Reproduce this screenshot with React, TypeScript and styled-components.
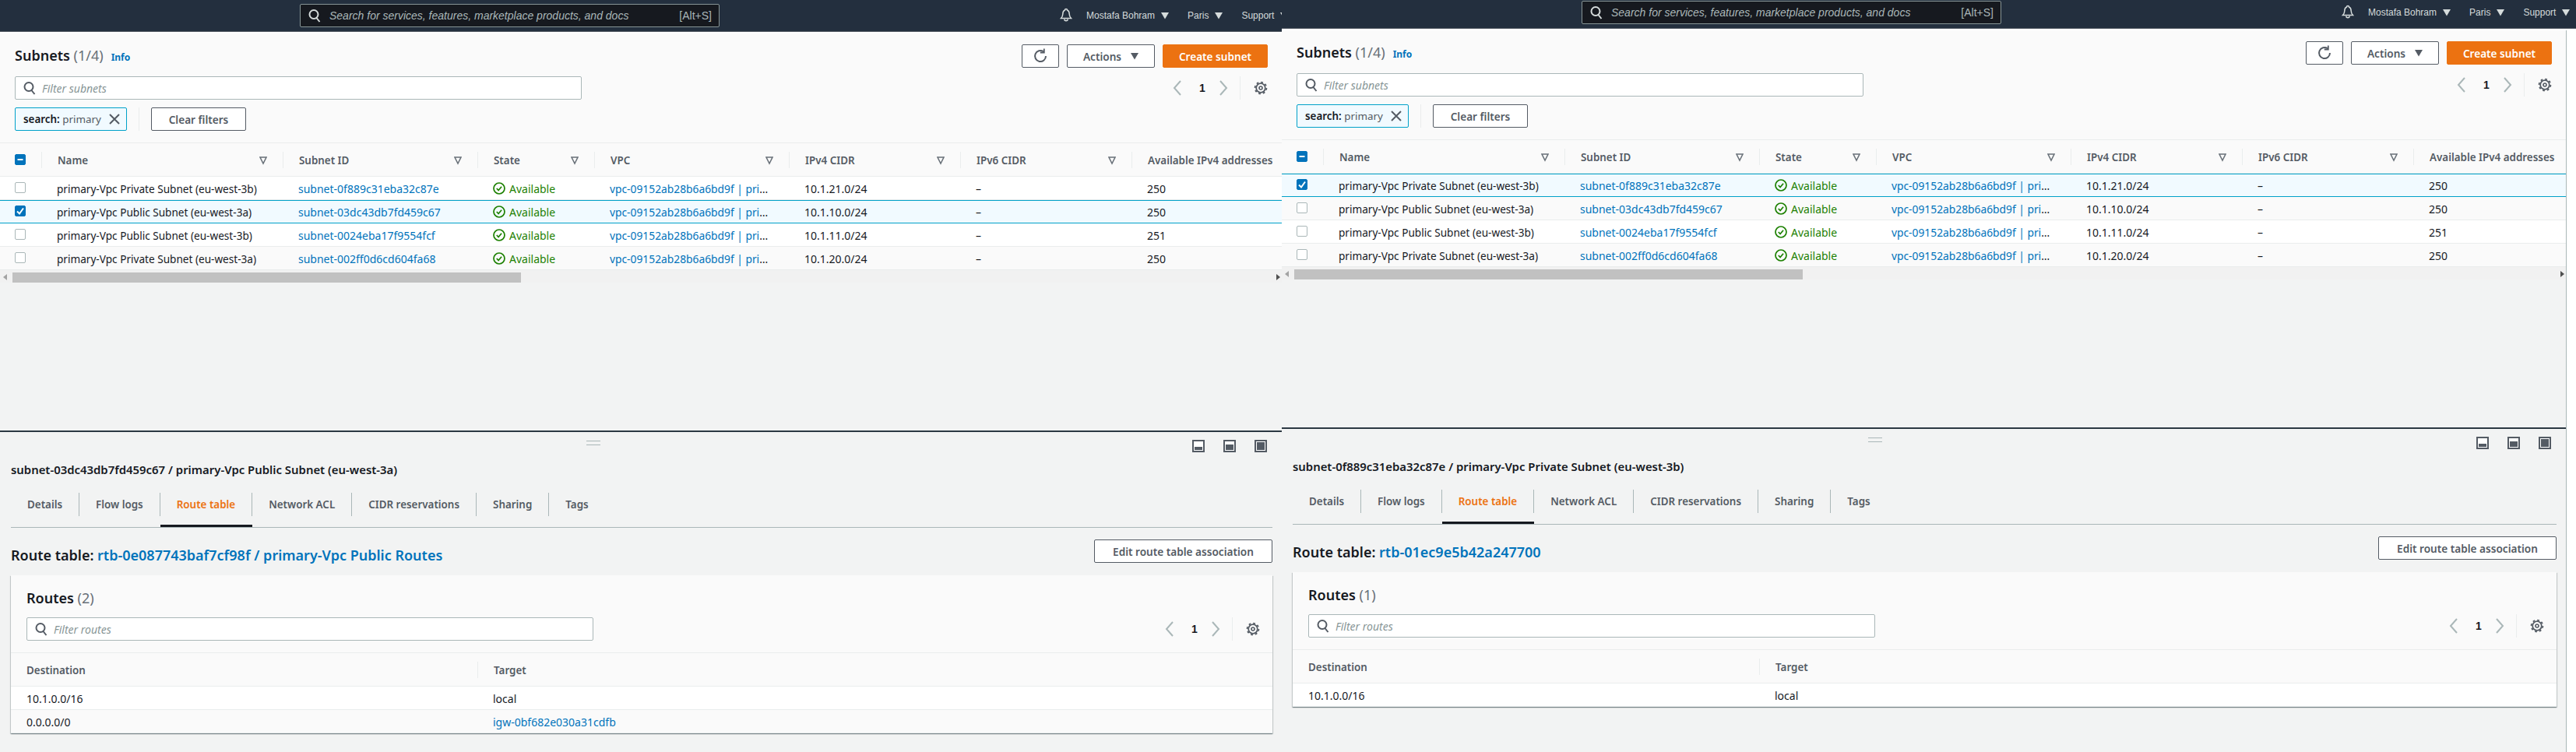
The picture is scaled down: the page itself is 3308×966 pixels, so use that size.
import React from "react";
import styled, { createGlobalStyle } from "styled-components";

const GlobalStyle = createGlobalStyle`
  html, body { margin: 0; padding: 0; background: #fff; }
  body { font-family: "Noto Sans", "Open Sans", sans-serif; font-size: 14px; color: #16191f; }
  * { box-sizing: border-box; }
`;

const Page = styled.div`
  display: flex;
  width: 3308px;
  height: 966px;
  overflow: hidden;
`;

const Pane = styled.section<{ $width: number }>`
  flex: none;
  width: ${(p) => p.$width}px;
  height: 966px;
  overflow: hidden;
`;

const TopNav = styled.header<{ $height: number }>`
  display: flex;
  align-items: flex-end;
  width: 1662px;
  height: ${(p) => p.$height}px;
  padding: 0 0 5px 385px;
  background: #232f3e;
  border-bottom: 1px solid #545b64;
  font-family: "Liberation Sans", Arial, sans-serif;
  color: #d5dbdb;
  font-size: 12px;
  white-space: nowrap;
`;

const GlobalSearch = styled.div`
  flex: none;
  display: flex;
  align-items: center;
  width: 539px;
  height: 30px;
  padding: 0 9px 0 10px;
  background: #16191f;
  border: 1px solid #879596;
  border-radius: 2px;
  color: #aab7b8;
  font-size: 14px;
`;

const GlobalPlaceholder = styled.span`
  flex: 1;
  margin-left: 11px;
  font-style: italic;
`;

const NavBell = styled.span`
  display: flex;
  height: 30px;
  align-items: center;
  margin: 0 18px 0 437px;
`;

const NavItem = styled.span`
  display: flex;
  align-items: center;
  gap: 8px;
  height: 30px;
  margin-right: 24px;
`;

const Content = styled.div<{ $width: number; $edge?: boolean }>`
  width: ${(p) => p.$width}px;
  height: 930px;
  background: #f2f3f3;
  border-right: ${(p) => (p.$edge ? "1px solid #aab7b8" : "none")};
`;

const Upper = styled.div`
  height: 510px;
  margin-top: 2px;
`;

const UpperHead = styled.div`
  padding: 14px 18px 15px 19px;
  background: #fafafa;
`;

const SplitRow = styled.div<{ $gap?: number }>`
  display: flex;
  align-items: center;
  justify-content: space-between;
  margin-top: ${(p) => p.$gap ?? 0}px;
`;

const Title = styled.h2<{ $drop?: boolean }>`
  margin: ${(p) => (p.$drop ? "9px 0 -1px" : "0")};
  font-size: 18px;
  line-height: 22px;
  font-weight: 600;
  color: #16191f;
`;

const Count = styled.span`
  font-weight: 400;
  color: #687078;
`;

const InfoLink = styled.a`
  margin-left: 10px;
  font-size: 12px;
  font-weight: 700;
  color: #0073bb;
`;

const Group = styled.div`
  display: flex;
  align-items: center;
  gap: 10px;
`;

const Button = styled.button<{ $primary?: boolean; $width: number }>`
  display: flex;
  align-items: center;
  justify-content: center;
  gap: 12px;
  width: ${(p) => p.$width}px;
  height: 30px;
  padding: 0;
  font: 600 13.6px "Noto Sans", sans-serif;
  color: ${(p) => (p.$primary ? "#fff" : "#545b64")};
  background: ${(p) => (p.$primary ? "#ec7211" : "#fff")};
  border: 1px solid ${(p) => (p.$primary ? "#ec7211" : "#545b64")};
  border-radius: 2px;
`;

const FilterBox = styled.div`
  display: flex;
  align-items: center;
  gap: 8px;
  width: 728px;
  height: 30px;
  padding-left: 10px;
  background: #fff;
  border: 1px solid #aab7b8;
  border-radius: 2px;
`;

const Placeholder = styled.span`
  font-style: italic;
  color: #879596;
`;

const Pager = styled.div`
  display: flex;
  align-items: center;
  height: 30px;
  color: #16191f;
`;

const PageNumber = styled.span`
  width: 45px;
  padding-left: 5px;
  text-align: center;
  font-family: "Liberation Sans", sans-serif;
  font-weight: 700;
`;

const PagerRule = styled.span`
  height: 30px;
  margin: 0 17px 0 14px;
  border-left: 1px solid #eaeded;
`;

const Token = styled.div`
  display: flex;
  align-items: center;
  justify-content: space-between;
  width: 144px;
  height: 30px;
  padding: 0 8px 0 10px;
  background: #f1faff;
  border: 1px solid #00a1c9;
  border-radius: 2px;
  font-size: 13.4px;
  color: #545b64;
  white-space: nowrap;
`;

const TokenKey = styled.span`
  font-weight: 600;
  color: #16191f;
`;

const TokenRule = styled.span`
  height: 30px;
  margin: 0 5px;
  border-left: 1px solid #eaeded;
`;

const Table = styled.div`
  border-top: 1px solid #eaeded;
`;

const Row = styled.div<{ $cols: string; $alt?: boolean; $selected?: boolean; $head?: boolean }>`
  display: grid;
  grid-template-columns: ${(p) => p.$cols};
  align-items: center;
  height: ${(p) => (p.$head ? 43 : 30)}px;
  background: ${(p) => (p.$selected ? "#f1faff" : p.$alt || p.$head ? "#fafafa" : "#fff")};
  box-shadow: ${(p) =>
    p.$selected
      ? "inset 0 1px 0 #00a1c9, inset 0 -1px 0 #00a1c9"
      : "inset 0 -1px 0 #eaeded"};
`;

const HeadCell = styled.div<{ $plain?: boolean }>`
  display: flex;
  align-items: center;
  justify-content: space-between;
  height: 21px;
  padding: 0 20px;
  border-left: ${(p) => (p.$plain ? "none" : "1px solid #eaeded")};
  font-size: 13.4px;
  font-weight: 600;
  color: #545b64;
  white-space: nowrap;
`;

const CheckCell = styled.div`
  display: flex;
  align-items: center;
  padding-left: 19px;
`;

const CheckBox = styled.span<{ $on?: boolean }>`
  display: flex;
  align-items: center;
  justify-content: center;
  width: 14px;
  height: 14px;
  margin-top: -2px;
  background: ${(p) => (p.$on ? "#0073bb" : "#fff")};
  border: 1px solid ${(p) => (p.$on ? "#0073bb" : "#aab7b8")};
  border-radius: 2px;
`;

const Cell = styled.div`
  padding: 0 0 0 20px;
  white-space: nowrap;
`;

const NameCell = styled(Cell)`
  font-size: 13.6px;
`;

const VpcCell = styled(Cell)`
  padding-right: 26px;
  font-size: 13.8px;
  overflow: hidden;
  text-overflow: ellipsis;
`;

const Link = styled.a`
  color: #0073bb;
`;

const Status = styled(Cell)`
  display: flex;
  align-items: center;
  gap: 5px;
  color: #1d8102;
`;

const ScrollTrack = styled.div`
  display: flex;
  align-items: center;
  height: 16px;
  padding: 2px 2px 0 4px;
  background: #f1f1f1;
`;

const Thumb = styled.div`
  width: 653px;
  height: 13px;
  margin-left: 7px;
  margin-right: auto;
  background: #c1c1c1;
`;

const ScrollArrow = styled.span<{ $dir: "left" | "right" }>`
  width: 0;
  height: 0;
  border-style: solid;
  border-width: 4px 0 4px 0;
  border-color: transparent;
  ${(p) =>
    p.$dir === "left"
      ? "border-right: 5px solid #a3a3a3;"
      : "border-left: 5px solid #505050;"}
`;

const Lower = styled.div`
  height: 413px;
  padding: 0 12px 0 14px;
  border-top: 2px solid #2c3843;
`;

const ToolRow = styled.div`
  display: flex;
  align-items: center;
  height: 16px;
  margin-top: 10px;
  padding: 0 7px 0 739px;
`;

const Handle = styled.span`
  width: 18px;
  height: 6px;
  margin-bottom: 8px;
  border-top: 1px solid #aab7b8;
  border-bottom: 1px solid #aab7b8;
`;

const Tools = styled.div`
  display: flex;
  gap: 24px;
  margin-left: auto;
`;

const DetailTitle = styled.h3`
  margin: 12px 0 0;
  font-size: 14.9px;
  line-height: 20px;
  font-weight: 600;
  color: #16191f;
`;

const TabBar = styled.nav`
  display: flex;
  margin-top: 20px;
  border-bottom: 1px solid #aab7b8;
`;

const Tab = styled.div<{ $active?: boolean }>`
  height: 44px;
  box-shadow: ${(p) => (p.$active ? "inset 0 -3px 0 #16191f" : "none")};
`;

const TabLabel = styled.span<{ $active?: boolean; $last?: boolean }>`
  display: block;
  height: 30px;
  padding: 0 21px;
  line-height: 30px;
  font-size: 13.4px;
  font-weight: 600;
  color: ${(p) => (p.$active ? "#ec7211" : "#545b64")};
  border-right: ${(p) => (p.$last ? "none" : "1px solid #aab7b8")};
`;

const Card = styled.div`
  margin-top: 16px;
  background: #fafafa;
  box-shadow: 0 1px 1px 0 rgba(0, 28, 36, 0.3), 1px 1px 1px 0 rgba(0, 28, 36, 0.15),
    -1px 1px 1px 0 rgba(0, 28, 36, 0.15);
`;

const CardHead = styled.div`
  padding: 18px 16px 15px 20px;
`;

const Gear = () => (
  <svg width="18" height="18" viewBox="0 0 18 18" fill="none" stroke="#545b64">
    <circle cx="9" cy="9" r="5.800" strokeWidth="1.800" />
    <circle cx="9" cy="9" r="7.400" strokeWidth="1.800" strokeDasharray="2.800 3" />
    <circle cx="9" cy="9" r="2" strokeWidth="1.600" />
  </svg>
);

const Chevron = ({ right }: { right?: boolean }) => (
  <svg width="14" height="22" viewBox="0 0 14 22" fill="none" stroke="#aab7b8" strokeWidth="2">
    <path d={right ? "M3 2l8 9-8 9" : "M11 2l-8 9 8 9"} />
  </svg>
);

const SearchIcon = ({ color = "#545b64" }: { color?: string }) => (
  <svg width="16" height="18" viewBox="0 0 16 18" fill="none" stroke={color} strokeWidth="2">
    <circle cx="7" cy="7.500" r="5.500" />
    <path d="M10.500 12l4 5" />
  </svg>
);

const Caret = ({ color = "#d5dbdb", size = 10 }: { color?: string; size?: number }) => (
  <svg width={size} height={size} viewBox="0 0 10 10" fill={color}>
    <path d="M0 1h10L5 9.500z" />
  </svg>
);

const FilterCaret = () => (
  <svg width="10" height="12" viewBox="0 0 10 12" fill="none" stroke="#687078" strokeWidth="1.500">
    <path d="M1 2h8L5 10z" />
  </svg>
);

const CheckCircle = () => (
  <svg width="16" height="16" viewBox="0 0 16 16" fill="none" stroke="#1d8102" strokeWidth="1.700">
    <circle cx="8" cy="8" r="7" />
    <path d="M4.800 8l2.300 2.500 4-4.800" />
  </svg>
);

const Bell = () => (
  <svg width="16" height="20" viewBox="0 0 16 20" fill="none" stroke="#d5dbdb" strokeWidth="1.500">
    <path d="M8 1.500c-1 0-1.500.8-1.500 1.500C4 4 3.800 6 3.800 8c0 2.500-.8 4-2.300 5.500h13C13 12 12.200 10.500 12.200 8c0-2-.2-4-2.700-5C9.500 2.300 9 1.500 8 1.500z" />
    <path d="M5.800 14.500a2.200 2.200 0 0 0 4.400 0" />
  </svg>
);

const Refresh = () => (
  <svg width="18" height="20" viewBox="0 0 18 20" fill="none" stroke="#545b64" strokeWidth="2">
    <path d="M13 4.300A7 7 0 1 0 16 10" />
    <path d="M13.800 0.500v5h-5" strokeWidth="1.800" />
  </svg>
);

const CloseIcon = () => (
  <svg width="14" height="14" viewBox="0 0 14 14" stroke="#545b64" strokeWidth="2">
    <path d="M1 1l12 12M13 1L1 13" />
  </svg>
);

const Minus = () => (
  <svg width="12" height="12" viewBox="0 0 12 12" stroke="#fff" strokeWidth="2">
    <path d="M2.500 6h7" />
  </svg>
);

const Tick = () => (
  <svg width="12" height="12" viewBox="0 0 12 12" fill="none" stroke="#fff" strokeWidth="2">
    <path d="M2 6.500l3 3 5-7" />
  </svg>
);

// fill height of the lower panel inside the tool icon
const SplitIcon = ({ fill }: { fill: number }) => (
  <svg width="16" height="16" viewBox="0 0 16 16">
    <rect x="1" y="1" width="14" height="14" fill="#fff" stroke="#545b64" strokeWidth="2" />
    <rect x="3" y={13 - fill} width="10" height={fill} fill="#545b64" />
  </svg>
);

const subnetCols = "53px 310px 250px 150px 250px 220px 220px 1fr";
const vpc = "vpc-09152ab28b6a6bd9f | primary-Vpc";

const subnets = [
  { name: "primary-Vpc Private Subnet (eu-west-3b)", id: "subnet-0f889c31eba32c87e", cidr: "10.1.21.0/24", free: 250 },
  { name: "primary-Vpc Public Subnet (eu-west-3a)", id: "subnet-03dc43db7fd459c67", cidr: "10.1.10.0/24", free: 250 },
  { name: "primary-Vpc Public Subnet (eu-west-3b)", id: "subnet-0024eba17f9554fcf", cidr: "10.1.11.0/24", free: 251 },
  { name: "primary-Vpc Private Subnet (eu-west-3a)", id: "subnet-002ff0d6cd604fa68", cidr: "10.1.20.0/24", free: 250 },
];

const tabs = ["Details", "Flow logs", "Route table", "Network ACL", "CIDR reservations", "Sharing", "Tags"];
const heads = ["Name", "Subnet ID", "State", "VPC", "IPv4 CIDR", "IPv6 CIDR"];

type Route = { dest: string; target: string; link?: boolean };

type ConsoleProps = {
  width: number;
  contentWidth: number;
  navHeight: number;
  selected: number;
  routeLink: string;
  routes: Route[];
  edge?: boolean;
};

const Pagination = () => (
  <Pager>
    <Chevron />
    <PageNumber>1</PageNumber>
    <Chevron right />
    <PagerRule />
    <Gear />
  </Pager>
);

const Console = ({ width, contentWidth, navHeight, selected, routeLink, routes, edge }: ConsoleProps) => {
  const current = subnets[selected];
  return (
    <Pane $width={width}>
      <TopNav $height={navHeight}>
        <GlobalSearch>
          <SearchIcon color="#d5dbdb" />
          <GlobalPlaceholder>Search for services, features, marketplace products, and docs</GlobalPlaceholder>
          <span>[Alt+S]</span>
        </GlobalSearch>
        <NavBell>
          <Bell />
        </NavBell>
        <NavItem>
          Mostafa Bohram <Caret />
        </NavItem>
        <NavItem>
          Paris <Caret />
        </NavItem>
        <NavItem>
          Support <Caret />
        </NavItem>
      </TopNav>
      <Content $width={contentWidth} $edge={edge}>
        <Upper>
          <UpperHead>
            <SplitRow>
              <Title>
                Subnets <Count>(1/4)</Count>
                <InfoLink>Info</InfoLink>
              </Title>
              <Group>
                <Button $width={48}>
                  <Refresh />
                </Button>
                <Button $width={113}>
                  Actions <Caret color="#545b64" />
                </Button>
                <Button $width={135} $primary>
                  Create subnet
                </Button>
              </Group>
            </SplitRow>
            <SplitRow $gap={11}>
              <FilterBox>
                <SearchIcon />
                <Placeholder>Filter subnets</Placeholder>
              </FilterBox>
              <Pagination />
            </SplitRow>
            <SplitRow $gap={10}>
              <Group>
                <Token>
                  <span>
                    <TokenKey>search:</TokenKey> primary
                  </span>
                  <CloseIcon />
                </Token>
                <TokenRule />
                <Button $width={122}>Clear filters</Button>
              </Group>
            </SplitRow>
          </UpperHead>
          <Table>
            <Row $cols={subnetCols} $head>
              <CheckCell>
                <CheckBox $on>
                  <Minus />
                </CheckBox>
              </CheckCell>
              {heads.map((h) => (
                <HeadCell key={h}>
                  {h} <FilterCaret />
                </HeadCell>
              ))}
              <HeadCell>Available IPv4 addresses</HeadCell>
            </Row>
            {subnets.map((s, i) => (
              <Row key={s.id} $cols={subnetCols} $alt={i % 2 === 1} $selected={i === selected}>
                <CheckCell>
                  <CheckBox $on={i === selected}>{i === selected && <Tick />}</CheckBox>
                </CheckCell>
                <NameCell>{s.name}</NameCell>
                <Cell>
                  <Link>{s.id}</Link>
                </Cell>
                <Status>
                  <CheckCircle />
                  Available
                </Status>
                <VpcCell>
                  <Link>{vpc}</Link>
                </VpcCell>
                <Cell>{s.cidr}</Cell>
                <Cell>–</Cell>
                <Cell>{s.free}</Cell>
              </Row>
            ))}
          </Table>
          <ScrollTrack>
            <ScrollArrow $dir="left" />
            <Thumb />
            <ScrollArrow $dir="right" />
          </ScrollTrack>
        </Upper>
        <Lower>
          <ToolRow>
            <Handle />
            <Tools>
              <SplitIcon fill={4} />
              <SplitIcon fill={7} />
              <SplitIcon fill={10} />
            </Tools>
          </ToolRow>
          <DetailTitle>
            {current.id} / {current.name}
          </DetailTitle>
          <TabBar>
            {tabs.map((t, i) => (
              <Tab key={t} $active={t === "Route table"}>
                <TabLabel $active={t === "Route table"} $last={i === tabs.length - 1}>
                  {t}
                </TabLabel>
              </Tab>
            ))}
          </TabBar>
          <SplitRow $gap={15}>
            <Title $drop>
              Route table: <Link>{routeLink}</Link>
            </Title>
            <Button $width={229}>Edit route table association</Button>
          </SplitRow>
          <Card>
            <CardHead>
              <Title>
                Routes <Count>({routes.length})</Count>
              </Title>
              <SplitRow $gap={14}>
                <FilterBox>
                  <SearchIcon />
                  <Placeholder>Filter routes</Placeholder>
                </FilterBox>
                <Pagination />
              </SplitRow>
            </CardHead>
            <Table>
              <Row $cols="599px 1fr" $head>
                <HeadCell $plain>Destination</HeadCell>
                <HeadCell>Target</HeadCell>
              </Row>
              {routes.map((r, i) => (
                <Row key={r.dest} $cols="599px 1fr" $alt={i % 2 === 1}>
                  <Cell>{r.dest}</Cell>
                  <Cell>{r.link ? <Link>{r.target}</Link> : r.target}</Cell>
                </Row>
              ))}
            </Table>
          </Card>
        </Lower>
      </Content>
    </Pane>
  );
};

const App = () => (
  <Page>
    <GlobalStyle />
    <Console
      width={1646}
      contentWidth={1646}
      navHeight={41}
      selected={1}
      routeLink="rtb-0e087743baf7cf98f / primary-Vpc Public Routes"
      routes={[
        { dest: "10.1.0.0/16", target: "local" },
        { dest: "0.0.0.0/0", target: "igw-0bf682e030a31cdfb", link: true },
      ]}
    />
    <Console
      width={1662}
      contentWidth={1650}
      navHeight={37}
      selected={0}
      routeLink="rtb-01ec9e5b42a247700"
      routes={[{ dest: "10.1.0.0/16", target: "local" }]}
      edge
    />
  </Page>
);

export default App;
